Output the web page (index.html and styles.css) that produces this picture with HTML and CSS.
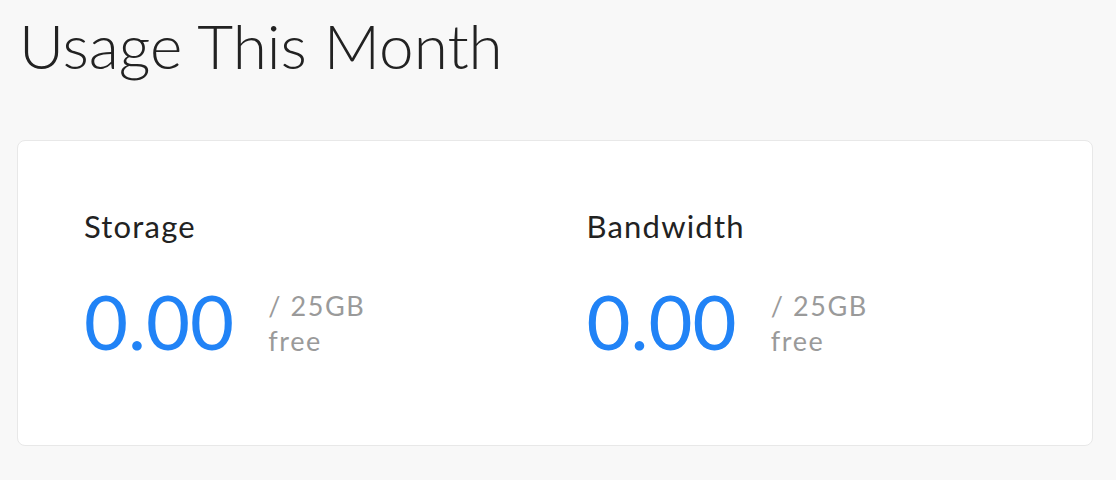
FILE: index.html
```html
<!DOCTYPE html>
<html lang="en">
<head>
    <meta charset="UTF-8">
    <title>Usage This Month</title>
    <link rel="stylesheet" href="styles.css">
</head>
<body>
<h1 class="page-title">Usage This Month</h1>

<section class="usage-card">
    <div class="usage-item">
        <h3 class="usage-label">Storage</h3>
        <div class="usage-value">
            <span class="usage-amount">0.00</span>
            <span class="usage-limit">/ 25GB<br>free</span>
        </div>
    </div>
    <div class="usage-item">
        <h3 class="usage-label">Bandwidth</h3>
        <div class="usage-value">
            <span class="usage-amount">0.00</span>
            <span class="usage-limit">/ 25GB<br>free</span>
        </div>
    </div>
</section>
</body>
</html>
```

FILE: styles.css
```css
body {
    margin: 0;
    padding: 0 23px 0 17px;
    background-color: #f8f8f8;
    font-family: "Lato", "Noto Sans", sans-serif;
    color: #222;
}

.page-title {
    margin: 0;
    padding: 5px 0 0 2px;
    font-size: 62px;
    font-weight: 300;
    line-height: 80px;
    letter-spacing: 0;
}

.usage-card {
    margin-top: 55px;
    height: 306px;
    box-sizing: border-box;
    padding: 67px 66px 0;
    background-color: #fff;
    border: 1px solid #e8e8e8;
    border-radius: 8px;
    display: grid;
    grid-template-columns: 1fr 1fr;
    column-gap: 63px;
}

.usage-label {
    margin: 0;
    font-size: 31px;
    font-weight: 400;
    line-height: 36px;
    letter-spacing: 1.2px;
}

.usage-value {
    margin-top: 39px;
    display: flex;
    align-items: flex-start;
    gap: 34px;
}

.usage-amount {
    font-size: 76px;
    line-height: 76px;
    color: #2183f6;
}

.usage-limit {
    margin-top: 5px;
    font-size: 27px;
    line-height: 35px;
    letter-spacing: 1.6px;
    color: #9a9a9a;
}
```
